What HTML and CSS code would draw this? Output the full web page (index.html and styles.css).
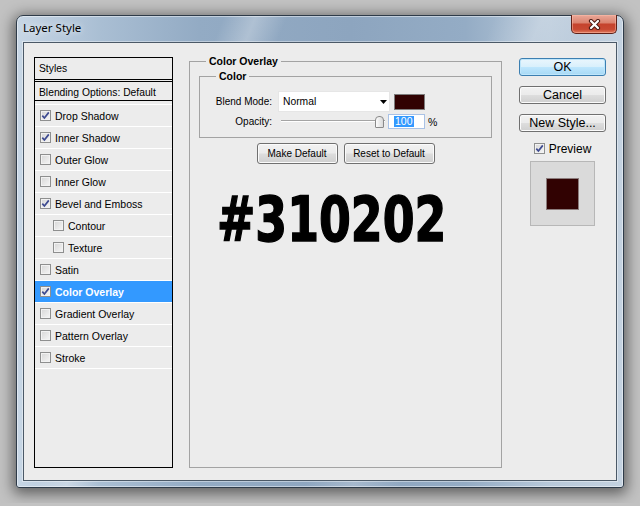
FILE: index.html
```html
<!DOCTYPE html>
<html lang="en">
<head>
  <meta charset="UTF-8" />
  <title>Layer Style</title>
  <link rel="stylesheet" href="styles.css">
</head>
<body>
  <div class="window">
    <div class="titlebar">
      <span class="title">Layer Style</span>
      <button class="close-btn">
        <svg width="13" height="11" viewBox="0 0 13 11"><path d="M3 2 L10 9 M10 2 L3 9" stroke="#4a1a14" stroke-width="4.2" stroke-linecap="round"/><path d="M3 2 L10 9 M10 2 L3 9" stroke="#fff" stroke-width="2.2" stroke-linecap="round"/></svg>
      </button>
    </div>

    <div class="client">
      <div class="style-list">
        <div class="list-head">Styles</div>
        <div class="list-blend">Blending Options: Default</div>
        <ul class="fx-list">
          <li class="fx"><span class="cb on"><svg width="9" height="9" viewBox="0 0 9 9"><path d="M1.3 4.6 L3.4 7 L7.8 1.4" stroke="#3d4a90" stroke-width="1.7" fill="none"/></svg></span>Drop Shadow</li>
          <li class="fx"><span class="cb on"><svg width="9" height="9" viewBox="0 0 9 9"><path d="M1.3 4.6 L3.4 7 L7.8 1.4" stroke="#3d4a90" stroke-width="1.7" fill="none"/></svg></span>Inner Shadow</li>
          <li class="fx"><span class="cb"></span>Outer Glow</li>
          <li class="fx"><span class="cb"></span>Inner Glow</li>
          <li class="fx"><span class="cb on"><svg width="9" height="9" viewBox="0 0 9 9"><path d="M1.3 4.6 L3.4 7 L7.8 1.4" stroke="#3d4a90" stroke-width="1.7" fill="none"/></svg></span>Bevel and Emboss</li>
          <li class="fx sub"><span class="cb"></span>Contour</li>
          <li class="fx sub"><span class="cb"></span>Texture</li>
          <li class="fx"><span class="cb"></span>Satin</li>
          <li class="fx active"><span class="cb on"><svg width="9" height="9" viewBox="0 0 9 9"><path d="M1.3 4.6 L3.4 7 L7.8 1.4" stroke="#3d4a90" stroke-width="1.7" fill="none"/></svg></span>Color Overlay</li>
          <li class="fx"><span class="cb"></span>Gradient Overlay</li>
          <li class="fx"><span class="cb"></span>Pattern Overlay</li>
          <li class="fx"><span class="cb"></span>Stroke</li>
        </ul>
      </div>

      <fieldset class="group">
        <legend>Color Overlay</legend>
        <fieldset class="subgroup">
          <legend>Color</legend>
          <div class="row">
            <span class="lbl">Blend Mode:</span>
            <div class="select">Normal<svg width="7" height="4" viewBox="0 0 7 4"><path d="M0 0 H7 L3.5 4 Z" fill="#000"/></svg></div>
            <span class="swatch"></span>
          </div>
          <div class="row row-op">
            <span class="lbl">Opacity:</span>
            <div class="slider"><span class="thumb"></span></div>
            <span class="num"><span class="sel">100</span></span>
            <span class="pct">%</span>
          </div>
        </fieldset>
        <div class="btn-row">
          <button class="btn btn-make">Make Default</button>
          <button class="btn btn-reset">Reset to Default</button>
        </div>
        <div class="hex">#310202</div>
      </fieldset>

      <div class="side">
        <button class="btn side-btn default">OK</button>
        <button class="btn side-btn">Cancel</button>
        <button class="btn side-btn">New Style...</button>
        <div class="preview-check"><span class="cb on"><svg width="9" height="9" viewBox="0 0 9 9"><path d="M1.3 4.6 L3.4 7 L7.8 1.4" stroke="#3d4a90" stroke-width="1.7" fill="none"/></svg></span>Preview</div>
        <div class="preview-box"><span class="preview-swatch"></span></div>
      </div>
    </div>
  </div>
</body>
</html>
```

FILE: styles.css
```css
* { box-sizing: border-box; }
body { margin: 0; padding: 15px 16px; background: #c2c2c2; font-family: "Liberation Sans", Arial, sans-serif; font-size: 10.3px; color: #000; }

.window { width: 608px; height: 473px; display: flex; flex-direction: column; border: 1px solid #2e3b49; border-radius: 7px 7px 3px 3px; box-shadow: inset 0 0 0 1px rgba(255,255,255,0.45), 0 3px 14px 3px rgba(0,0,0,0.5);
  background:
    linear-gradient(112deg, rgba(255,255,255,0) 26%, rgba(255,255,255,0.28) 30%, rgba(255,255,255,0) 34%, rgba(255,255,255,0) 60%, rgba(255,255,255,0.22) 66%, rgba(255,255,255,0) 72%),
    linear-gradient(90deg, #c7d6e5 0%, #a9bed3 14%, #93abc4 30%, #8da5bf 55%, #94acc5 74%, #b8c9da 88%, #c4d2e0 100%); }
.titlebar { height: 26px; display: flex; align-items: flex-start; padding: 0 6px; }
.title { font-family: "Noto Sans", "Liberation Sans", sans-serif; font-size: 11.5px; padding-top: 4px; color: #000; text-shadow: 0 0 6px rgba(255,255,255,0.9); }
.close-btn { margin-left: auto; margin-top: -1px; width: 46px; height: 19px; padding: 0; display: flex; align-items: center; justify-content: center; border: 1px solid #5e2119; border-top: none; border-radius: 0 0 5px 5px; box-shadow: inset 0 0 0 1px rgba(255,190,170,0.5);
  background: linear-gradient(#eaa899 0%, #db8470 42%, #c5432d 52%, #c84a33 80%, #df7a5e 100%); }

.client { margin: 0 6px; height: 439px; display: flex; align-items: flex-start; padding: 12px 0 0 10px; background: #ececec; border: 1px solid #4b5967; box-shadow: 0 0 0 1px rgba(255,255,255,0.4); }

.style-list { width: 139px; height: 411px; margin-top: 2px; border: 1px solid #000; flex: none; }
.list-head { height: 24px; line-height: 21px; padding-left: 4px; border-bottom: 3px double #000; }
.list-blend { height: 19px; line-height: 15px; padding: 3px 0 0 4px; border-bottom: 1px solid #000; }
.fx-list { list-style: none; margin: 3px 0 0; padding: 0; }
.fx { height: 22px; display: flex; align-items: center; padding-left: 5px; border-top: 1px solid #fff; font-size: 10.5px; }
.fx:last-child { height: 23px; border-bottom: 1px solid #fff; }
.fx.sub { padding-left: 18px; }
.fx.active { background: #3399ff; color: #fff; font-weight: bold; }

.cb { width: 11px; height: 11px; margin-right: 4px; flex: none; display: inline-flex; align-items: center; justify-content: center; border: 1px solid #8e8f8f; background: linear-gradient(135deg, #d6d6d6, #f6f6f6); box-shadow: inset 0 0 0 1px #f2f2f2; }

.group { width: 313px; min-width: 0; height: 413px; margin: 0 0 0 16px; padding: 0 9px; border: 1px solid #a3a3a3; flex: none; overflow: visible; }
.group legend, .subgroup legend { font-weight: bold; font-size: 10.5px; line-height: 12px; padding: 0 3px; }
.group > legend { margin-left: 7px; }
.subgroup { min-width: 0; margin: 3px 0 0; padding: 9px 0 8px; border: 1px solid #a3a3a3; }
.subgroup > legend { margin-left: 16px; }

.row { display: flex; align-items: center; height: 21px; }
.row-op { height: 15px; margin-top: 2px; }
.lbl { width: 72px; margin-right: 6px; text-align: right; font-size: 10px; }
.select { width: 112px; height: 21px; display: flex; align-items: center; justify-content: space-between; padding: 0 2px 0 4px; background: #fff; border: 1px solid #e6e6e6; }
.swatch { width: 31px; height: 16px; margin-left: 4px; background: #310202; border: 1px solid #7d7d7d; }
.slider { width: 104px; height: 15px; margin-left: 3px; display: flex; align-items: center; justify-content: flex-end; padding-right: 1px;
  background: linear-gradient(transparent 6px, #a4a4a4 6px, #a4a4a4 7px, #fff 7px, #fff 8px, transparent 8px); }
.thumb { width: 9px; height: 12px; border: 1px solid #8a8a8a; border-radius: 4px 4px 1px 1px; background: linear-gradient(90deg, #fdfdfd, #d9d9d9); }
.num { width: 37px; height: 15px; margin-left: 3px; padding-left: 5px; display: flex; align-items: center; background: #fff; border: 1px solid #a9c2e6; }
.sel { background: #3399ff; color: #fff; line-height: 11px; padding: 0 1px; font-size: 10.5px; }
.pct { margin-left: 3px; font-size: 10.5px; }

.btn { padding: 0; font-family: inherit; font-size: 10px; color: #000; border: 1px solid #707070; border-radius: 3px; box-shadow: inset 0 0 0 1px #fbfbfb; background: linear-gradient(#f2f2f2 0%, #ebebeb 48%, #dddddd 52%, #cfcfcf 100%); }
.btn-row { display: flex; justify-content: center; gap: 6px; margin-top: 5px; }
.btn-make { width: 81px; height: 21px; }
.btn-reset { width: 91px; height: 21px; }

.hex { width: 0; margin-top: 31px; padding-left: 22px; font-family: "DejaVu Sans Condensed", "DejaVu Sans", sans-serif; font-stretch: condensed; font-weight: bold; font-size: 62px; line-height: 50px; white-space: nowrap; -webkit-text-stroke: 1.4px #000; transform: scaleX(0.82); transform-origin: left center; }

.side { width: 87px; margin: 3px 0 0 17px; display: flex; flex-direction: column; align-items: center; flex: none; }
.side-btn { width: 87px; height: 18px; margin-bottom: 10px; font-size: 12.5px; }
.side-btn.default { border-color: #3c7fb1; box-shadow: inset 0 0 0 1px #bfe6fb; background: linear-gradient(#eaf6fd 0%, #d9f0fc 48%, #bee6fd 52%, #a7d9f5 100%); }
.preview-check { height: 13px; display: flex; align-items: center; font-size: 12px; }
.preview-box { width: 65px; height: 65px; margin-top: 6px; display: flex; align-items: center; justify-content: center; background: #dadada; border: 1px solid #b7b7b7; }
.preview-swatch { width: 33px; height: 32px; background: #310202; border: 1px solid #8b7c7c; }
```
